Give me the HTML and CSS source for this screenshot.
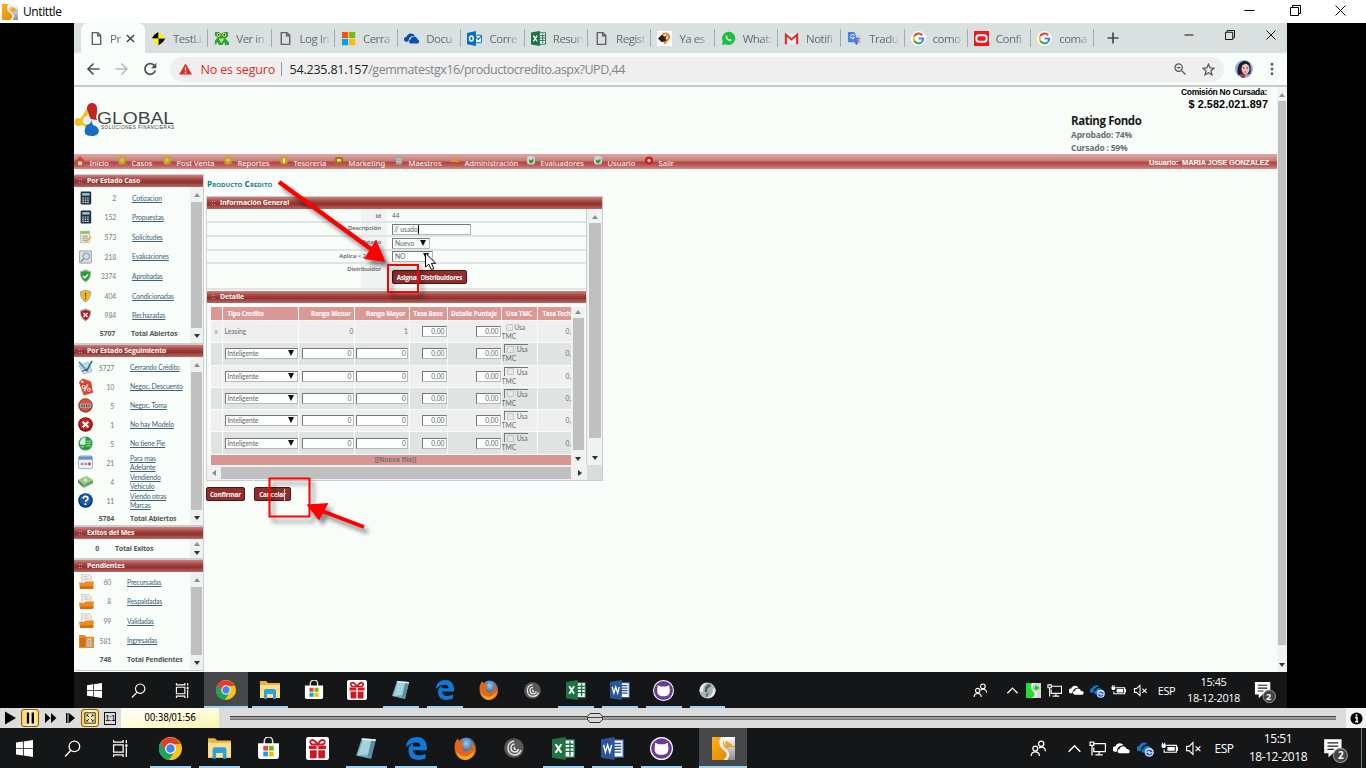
FILE: index.html
```html
<!DOCTYPE html>
<html lang="es">
<head>
<meta charset="utf-8">
<title>Untittle</title>
<link rel="stylesheet" href="styles.css">
</head>
<body>
<svg class="defs" aria-hidden="true">
<defs>
<linearGradient id="gold" x1="0" y1="0" x2="1" y2="1"><stop offset="0" stop-color="#ffae18"/><stop offset="1" stop-color="#dc8500"/></linearGradient>
<linearGradient id="silver" x1="0" y1="0" x2="0" y2="1"><stop offset="0" stop-color="#fff"/><stop offset="1" stop-color="#8e8e8e"/></linearGradient>
<radialGradient id="ffx" cx=".5" cy=".3"><stop offset="0" stop-color="#8fd0f5"/><stop offset="1" stop-color="#1e4fa0"/></radialGradient>
<symbol id="player" viewBox="0 0 16 16"><path fill="url(#gold)" d="M0 0h16v16H0z"/><path fill="url(#silver)" d="M6 0h10v6.500H9C8 4 9 2 6 0zM16 7v9H9c2-2 2-4 0-6-1-1-2-2-1-3z"/><path fill="#f0f0f0" d="M6.500 0C4 3 5 7 8 9s3 4 0 7h2.500c3-4 1-6-1-8s-3-4 0-8z"/><path fill="#ffa01a" d="M9.500 2.500l5 3-5 3z"/></symbol>
<symbol id="player-green" viewBox="0 0 16 16"><path fill="#1fe02a" d="M0 0h16v16H0z"/><path fill="#d6d6d6" d="M6 0h10v6H9zM16 6v10H6c4-3 3-5 1-8z"/><path fill="#f0f0f0" d="M6.500 0C4 3 5 7 8 9s3 4 0 7h2.500c3-4 1-6-1-8s-3-4 0-8z"/><path fill="#18c820" d="M9.500 2l5 3-5 3z"/></symbol>
<symbol id="min" viewBox="0 0 11 11"><path d="M.5 5.500h10" stroke="#000"/></symbol>
<symbol id="restore" viewBox="0 0 11 11"><path d="M.5 2.500h8v8h-8zM2.500 2V.5h8v8H9" fill="none" stroke="#000"/></symbol>
<symbol id="close" viewBox="0 0 11 11"><path d="M.5.5l10 10M10.500 .5l-10 10" fill="none" stroke="#000"/></symbol>
<symbol id="page" viewBox="0 0 16 16"><path d="M3.500 1.700h6l3 3v9.600h-9zM9.200 2v3.100h3.200" fill="none" stroke="#5f6368" stroke-width="1.500"/></symbol>
<symbol id="testlink" viewBox="0 0 16 16"><path d="M8 .5L.5 8H8z"/><path d="M8 .5V8h7.500z" fill="#ffee10"/><path d="M.5 8L8 15.500V8z" fill="#ffee10"/><path d="M8 8v7.500L15.500 8z"/><path d="M8 2a6 6 0 0 0-6 6h6zM8 8v6a6 6 0 0 0 6-6z"/><path d="M8 2v6h6a6 6 0 0 0-6-6zM2 8a6 6 0 0 0 6 6V8z" fill="#ffee10"/></symbol>
<symbol id="frog" viewBox="0 0 16 16"><path d="M1 1h4l3 2 3-2h4v5l-3 2 4 4v3h-4l-1-3-2 3H5l-1-3-3 3v-5l3-3-3-2z" fill="#2aa43a"/><circle cx="5" cy="4" r="2" fill="#f4e04a"/><circle cx="11" cy="4" r="2" fill="#f4e04a"/><path d="M5 8h6l-3 5z" fill="#b7ea70"/><circle cx="5" cy="4" r=".8"/><circle cx="11" cy="4" r=".8"/></symbol>
<symbol id="ms" viewBox="0 0 16 16"><path fill="#f65314" d="M1 1h6.600v6.600H1z"/><path fill="#7cbb00" d="M8.600 1h6.600v6.600H8.600z"/><path fill="#00a1f1" d="M1 8.600h6.600v6.600H1z"/><path fill="#ffbb00" d="M8.600 8.600h6.600v6.600H8.600z"/></symbol>
<symbol id="onedrive" viewBox="0 0 18 14"><path fill="#0b4fae" d="M5 11H3a3 3 0 0 1 0-6c1-4 7-6 10-1-5-.5-7 2-8 7z"/><path fill="#0b4fae" d="M8 13c-3-1-2-5 0-5 1-5 8-4 8 0 3 1 3 5 0 5z"/></symbol>
<symbol id="outlook" viewBox="0 0 16 16"><path fill="#fff" stroke="#0072c6" d="M9 4.500h6.500v8H9z"/><path d="M9 6l3 3 4-4" stroke="#0072c6" fill="none" stroke-width="1.300"/><path fill="#0072c6" d="M0 2l9.500-2v16L0 14z"/><ellipse cx="4.700" cy="8" rx="2" ry="2.700" fill="none" stroke="#fff" stroke-width="1.500"/></symbol>
<symbol id="excel" viewBox="0 0 16 16"><path fill="#fff" stroke="#207245" d="M8 2h7.500v12H8z"/><path stroke="#207245" d="M9 5h6M9 7.500h6M9 10h6M12.500 3v10"/><path fill="#207245" d="M0 1.500L9.500 0v16L0 14.500z"/><path d="M2.500 5l4 6M6.500 5l-4 6" stroke="#fff" stroke-width="1.400"/></symbol>
<symbol id="word" viewBox="0 0 16 16"><path fill="#fff" stroke="#2a5699" d="M8 2h7.500v12H8z"/><path stroke="#2a5699" d="M9 4.500h5M9 6.500h5M9 8.500h5M9 10.500h5"/><path fill="#2a5699" d="M0 1.500L9.500 0v16L0 14.500z"/><path d="M1.800 5.500l1.300 5 1.500-5 1.500 5 1.300-5" stroke="#fff" fill="none"/></symbol>
<symbol id="orangepin" viewBox="0 0 16 16"><path fill="#fff" d="M0 0h16v16H0z"/><path d="M5 4c1-4 9-3 9 2 0 3-3 5-6 9 0-3-2-4-2-5z" fill="#f58220"/><circle cx="9" cy="6" r="2.500" fill="#fff"/><path d="M1 8l4-4 3 2 3-2-2 4 1 2-5 2z" fill="#222"/></symbol>
<symbol id="whatsapp" viewBox="0 0 16 16"><path d="M1 15l1-4a7 7 0 1 1 3 3z" fill="#16c03c"/><path d="M5.500 4.500c-2 2 2 7 5.500 6.500l.6-1.700-2-1-1 1c-1-.4-1.800-1.200-2.200-2.300l.8-1z" fill="#fff"/></symbol>
<symbol id="gmail" viewBox="0 0 16 16"><path fill="#eee" d="M1 3h14v11H1z"/><path d="M2 14V4l6 5 6-5v10" fill="none" stroke="#d93025" stroke-width="2.200"/></symbol>
<symbol id="translate" viewBox="0 0 16 16"><path fill="#d0d4d8" d="M6 4h9v11H9z"/><path fill="#4a80e8" d="M1 1h7l4 11H2a1 1 0 0 1-1-1z"/><path fill="#2a5dc0" d="M8 12h4l-2 3z"/><path d="M8 5a2.200 2.200 0 1 0 0 2H6" fill="none" stroke="#fff"/><path d="M10 8h4M12 7v1c0 2-1 3-2 4M11 9l3 3" stroke="#667" fill="none" stroke-width=".8"/></symbol>
<symbol id="google" viewBox="0 0 16 16"><circle cx="8" cy="8" r="8" fill="#fff"/><g fill="none" stroke-width="2.200"><path d="M12 4.600A5.200 5.200 0 0 0 3.400 5.600" stroke="#ea4335"/><path d="M3.400 5.600a5.200 5.200 0 0 0 0 4.800" stroke="#fbbc05"/><path d="M3.400 10.400a5.200 5.200 0 0 0 8 1.500" stroke="#34a853"/><path d="M11.400 11.900c1.300-1.200 1.800-2.500 1.700-3.900H8" stroke="#4285f4"/></g></symbol>
<symbol id="oracle" viewBox="0 0 16 16"><path fill="#f01820" d="M0 0h16v16H0z"/><rect x="2.500" y="4.500" width="11" height="7" rx="3" fill="none" stroke="#fff" stroke-width="2"/></symbol>
<symbol id="win" viewBox="0 0 16 16"><path fill="#fff" d="M0 2.300l6.500-.9v6.100H0zM7.300 1.300L16 0v7.500H7.300zM0 8.300h6.500v6.200L0 13.600zM7.300 8.300H16V16l-8.700-1.300z"/></symbol>
<symbol id="search" viewBox="0 0 16 16"><circle cx="9.800" cy="6" r="5" fill="none" stroke="#fff" stroke-width="1.200"/><path d="M6.500 9.700L1 15.500" stroke="#fff" stroke-width="1.300"/></symbol>
<symbol id="taskview" viewBox="0 0 16 16"><path d="M1.500 4.500h9v7h-9zM1.500 0v2h9V0M1.500 16v-2h9v2M13.500 0v3M13.500 7v9" fill="none" stroke="#fff" stroke-width="1.200"/><path d="M12.500 4h2v2.500h-2z" fill="#fff"/></symbol>
<symbol id="chrome" viewBox="0 0 20 20"><circle cx="10" cy="10" r="10" fill="#fbc116"/><path d="M1.300 5a10 10 0 0 0 7.500 15l5.200-8-6 2z" fill="#1da45a"/><path d="M1.300 5L7 13l3-7h8.700A10 10 0 0 0 1.300 5z" fill="#e33b2e"/><circle cx="10" cy="10" r="4.700" fill="#fff"/><circle cx="10" cy="10" r="3.700" fill="#4285f4"/></symbol>
<symbol id="explorer" viewBox="0 0 20 20"><path fill="#e8b545" d="M0 1h6l2 2h12v15H0z"/><path fill="#fbe08b" d="M0 5h20v13H0z"/><path fill="#2f9fe0" d="M4 11a2 2 0 0 1 2-2h8a2 2 0 0 1 2 2v8h-3v-5H7v5H4z"/></symbol>
<symbol id="store" viewBox="0 0 20 22"><path d="M6 8V4a4 4 0 0 1 8 0v4" fill="none" stroke="#ddd" stroke-width="1.500"/><path fill="#fff" d="M0 6h20v13a2 2 0 0 1-2 2H2a2 2 0 0 1-2-2z"/><path fill="#e8492a" d="M5 8.500h4.500V13H5z"/><path fill="#79b900" d="M10.500 8.500H15V13h-4.500z"/><path fill="#12a0ea" d="M5 14h4.500v4.500H5z"/><path fill="#fcb900" d="M10.500 14H15v4.500h-4.500z"/></symbol>
<symbol id="gift" viewBox="0 0 20 20"><rect width="20" height="20" rx="2" fill="#fff"/><path d="M2.500 7.500h6.800v3H2.500zM10.700 7.500h6.800v3h-6.800zM3.500 11.500h5.800v7H3.500zM10.700 11.500h5.800v7h-5.800z" fill="#d01822"/><path d="M10 6.500C6 0 1.500 3 5 6.500h10c3.500-3.500-1-6.500-5 0z" fill="none" stroke="#d01822" stroke-width="1.700"/></symbol>
<symbol id="notepad" viewBox="0 0 20 20"><path d="M6 1l12 1-4 17-13-3z" fill="#78aebb"/><path d="M7 2l10 1-3.500 12-11 1z" fill="#a4d3df"/><path d="M14 3h4l-4 15-3-1z" fill="#5a8c9e"/><path d="M6 1l12 1v1.500L6 2.500z" fill="#e9eef0"/></symbol>
<symbol id="edge" viewBox="0 0 20 20"><path d="M1 9C1 3 5 0 10.500 0 16 0 19 4 19 9v2.500H7c.3 5 6 5.500 11 3v4c-7 3-15 1.500-15-7 0-3 2-5 4.500-6-.7 1-.8 2-.8 2.800h7c0-5-8-4.800-12.700.7z" fill="#0f79d6"/></symbol>
<symbol id="firefox" viewBox="0 0 20 20"><circle cx="10.500" cy="9" r="8.500" fill="url(#ffx)"/><path d="M1 5l2-4 2 3c2-1 3-1 4-.5L7 6l2 2-2 1c0 4 5 4 6 2 3 0 3-5 1-8 8 5 6 16-4 17C3 20-1 13 1 5z" fill="#e0661a"/><path d="M2 12c3 6 11 7 16-1-1 6-5 9-9 9-4-.5-7-4-7-8z" fill="#f6a21b"/></symbol>
<symbol id="swirl" viewBox="0 0 20 20"><circle cx="10" cy="10" r="9.800" fill="#58595b"/><path d="M10 3C2 4 2 16 10 17c3 0 6-2 7-5M10.500 6c-5 1-4.500 8 .5 8 2 0 3-1 3.500-3M11 9c-1.500 1-.5 3 1 2" fill="none" stroke="#e5e5e5" stroke-width="1.500"/></symbol>
<symbol id="github" viewBox="0 0 20 20"><circle cx="10" cy="10" r="10" fill="#fff"/><circle cx="10" cy="10" r="9" fill="#6b3b98"/><path d="M4.500 5l3 1.200h5l3-1.200.5 5c0 4-2 5.500-6 5.500S4 14 4 10z" fill="#fff"/></symbol>
<symbol id="ball" viewBox="0 0 20 20"><circle cx="10" cy="10" r="9.500" fill="#a9b4b5"/><path d="M10 .5C6 3 4 7 5 11l-4 1A9.500 9.500 0 0 1 10 .5zM9 19c5-2 8-6 7-11l3-1c2 6-3 13-10 12z" fill="#e9eded"/><path d="M7 12c-1-4 1-8 5-10l2 3c-3 1-5 4-4 7zM9 18l-1-4c3 0 5-2 6-5" fill="#566163"/></symbol>
<symbol id="people" viewBox="0 0 16 16"><g fill="none" stroke="#fff" stroke-width="1.200"><circle cx="10.500" cy="3.600" r="2.500"/><circle cx="5" cy="8" r="2.300"/><path d="M1.200 15c0-5 7.600-5 7.600 0M8.500 7.500c3-2 6-.5 6 3"/></g></symbol>
<symbol id="chev" viewBox="0 0 16 16"><path d="M2.500 11L8 5.500l5.500 5.500" fill="none" stroke="#fff" stroke-width="1.400"/></symbol>
<symbol id="net" viewBox="0 0 16 16"><path d="M5 3.500h10.500v7.500H4.500V7M9.500 11v3M6 14h7M1 2h3.500v3H1zM2.800 5v9.500" fill="none" stroke="#fff" stroke-width="1.200"/></symbol>
<symbol id="cloud" viewBox="0 0 16 16"><path fill="#fff" d="M3.500 11H2a2.500 2.500 0 0 1 .3-5C3.500 2.500 8 2 10 5 6 5 4 7 3.500 11z"/><path fill="#fff" d="M6 12.500c-2.500-.5-2-4 .2-4C7 5 12 5 12.500 8.300c4 .2 4 4 1.500 4.200z"/></symbol>
<symbol id="sync" viewBox="0 0 16 16"><path fill="#1873c8" d="M3.500 10.500H2a2.500 2.500 0 0 1 .3-5C3.500 2 8 1.500 10 4 6 4 4 6.500 3.500 10.500z"/><path fill="#1873c8" d="M6 12c-2.500-.5-2-4 .2-4C7 4.500 12 4.500 12.500 7.500z"/><circle cx="11.500" cy="11.500" r="4.300" fill="#cfe2ff"/><path d="M9 11c1-2 4-2 5 0h-2M14 12.500c-1 2-4 2-5 0h2" fill="none" stroke="#1d4fc0" stroke-width="1.100"/></symbol>
<symbol id="batt" viewBox="0 0 16 16"><path d="M5 5h9.500v6.500H3V9M14.500 7h1v2.500h-1" fill="none" stroke="#fff" stroke-width="1.100"/><path fill="#fff" d="M6 6.500h7V10H6zM.5 4h4v2.500l-1 1h-2l-1-1zM1 2.500h1V4H1zM3 2.500h1V4H3z"/></symbol>
<symbol id="vol" viewBox="0 0 16 16"><path d="M1.500 6h2.200L7.500 2.500v11L3.700 10H1.500zM10 6l4.500 4.500M14.500 6L10 10.500" fill="none" stroke="#fff" stroke-width="1.100"/></symbol>
<symbol id="note" viewBox="0 0 24 24"><path fill="#fff" d="M2 2h16v13h-8l-4 4v-4H2z"/><path d="M5 5.500h10M5 8.500h10M5 11.500h6" stroke="#222" stroke-width="1.200"/><circle cx="17" cy="17" r="6.500" fill="#454545" stroke="#999"/></symbol>
<symbol id="calc" viewBox="0 0 16 16"><rect x="2" y="0" width="13" height="16" rx="1.500" fill="#26303b"/><path fill="#91c9e4" d="M4 2h9v3H4z"/><path stroke="#dfe6ea" stroke-width="1.500" stroke-dasharray="2 1" d="M4 8h9M4 10.700h9M4 13.500h9"/></symbol>
<symbol id="form" viewBox="0 0 16 16"><path fill="#e8ecea" stroke="#9a9f9d" stroke-width=".7" d="M2 1h11v14H2z"/><path fill="#8dc63f" d="M2 1h11v3H2z"/><path stroke="#888" d="M4 7h7M4 9.500h7M4 12h5"/><path stroke="#e8b020" stroke-width="2" d="M8 14l7-6"/></symbol>
<symbol id="lens" viewBox="0 0 16 16"><rect x=".5" y=".5" width="15" height="15" rx="1" fill="#d8dedd" stroke="#8b9694"/><circle cx="9" cy="7" r="4" fill="#c5e0f2" stroke="#6e8796"/><path d="M6 10l-4 4" stroke="#6e8796" stroke-width="1.500"/></symbol>
<symbol id="sh-ok" viewBox="0 0 16 16"><path d="M8 0l7 2.500C15 9 13 13 8 16 3 13 1 9 1 2.500z" fill="#a7aca5"/><path d="M8 1.700l5.500 2C13.500 9 12 12 8 14.300 4 12 2.500 9 2.500 3.700z" fill="#20a028"/><path d="M5 8l2.300 2.300L11.200 6" stroke="#fff" stroke-width="1.800" fill="none"/></symbol>
<symbol id="sh-warn" viewBox="0 0 16 16"><path d="M8 0l7 2.500C15 9 13 13 8 16 3 13 1 9 1 2.500z" fill="#a7aca5"/><path d="M8 1.700l5.500 2C13.500 9 12 12 8 14.300 4 12 2.500 9 2.500 3.700z" fill="#f0bd1a"/><path d="M8 4v5M8 10.300v1.700" stroke="#6b5200" stroke-width="1.500"/></symbol>
<symbol id="sh-no" viewBox="0 0 16 16"><path d="M8 0l7 2.500C15 9 13 13 8 16 3 13 1 9 1 2.500z" fill="#a7aca5"/><path d="M8 1.700l5.500 2C13.500 9 12 12 8 14.300 4 12 2.500 9 2.500 3.700z" fill="#b81418"/><path d="M5.500 5.500l5 5M10.500 5.500l-5 5" stroke="#fff" stroke-width="1.700"/></symbol>
<symbol id="sign" viewBox="0 0 16 16"><path d="M1 6l10-4 4 10-9 3z" fill="#c3dbe7" stroke="#8fb0c0" stroke-width=".7"/><path d="M1 2l8 9" stroke="#5b93b2" stroke-width="2"/><path d="M15 1L9 12" stroke="#2f6e92" stroke-width="1.700"/><path d="M4 12l6-2" stroke="#444"/></symbol>
<symbol id="tag" viewBox="0 0 16 18"><path d="M1 4l4-4 9 3 2 12-10 3z" fill="#dd4630"/><circle cx="4.700" cy="3.500" r="1.200" fill="#fff"/><path d="M6.500 13.500l4-7" stroke="#fff" stroke-width="1.300"/><circle cx="6" cy="9" r="1.600" fill="none" stroke="#fff"/><circle cx="11.500" cy="12" r="1.600" fill="none" stroke="#fff"/></symbol>
<symbol id="sur" viewBox="0 0 16 16"><circle cx="8" cy="8" r="7.700" fill="#8f3a2c"/><circle cx="8" cy="7.500" r="6.500" fill="#d4583f"/><path d="M2 6h12v4.500H2z" fill="#b9a39c"/><path d="M3.500 8.300h9" stroke="#6b4640" stroke-width="2" stroke-dasharray="1.500 1"/></symbol>
<symbol id="xred" viewBox="0 0 16 16"><circle cx="8" cy="8" r="7.800" fill="#8d0d10"/><circle cx="8" cy="7.500" r="6.500" fill="#c9201f"/><path d="M5 5l6 6M11 5l-6 6" stroke="#fff" stroke-width="2.300"/></symbol>
<symbol id="coins" viewBox="0 0 16 16"><circle cx="8" cy="8" r="7.500" fill="#2c9a40"/><path d="M8 1a7 7 0 0 0-6 8h6z" fill="#d9efd5"/><path d="M3 9h4M3 11.500h4M9 5.500h5M9 8h5M9 10.500h4.500" stroke="#a7e0a5" stroke-width="1.100"/></symbol>
<symbol id="cal" viewBox="0 0 16 16"><rect x=".5" y="1" width="15" height="13.500" rx="2" fill="#eef2f8" stroke="#95a5c5"/><path fill="#5f91d4" d="M1 1.500h14v3.500H1z"/><path d="M3 9.500h3M7 9.500h3" stroke="#999" stroke-width="2.500"/><path d="M11 9.500h2.500" stroke="#d33" stroke-width="3"/></symbol>
<symbol id="money" viewBox="0 0 16 16"><path d="M0 6l9-4 7 4-10 5z" fill="#9cc884"/><path d="M0 6l6 5v4L0 9z" fill="#55904a"/><path d="M6 11l10-5v4l-10 5z" fill="#7fb46a"/><path d="M6 13l10-5" stroke="#4f8846" stroke-width=".8"/><circle cx="8" cy="6.300" r="1.900" fill="#d2ebc3"/></symbol>
<symbol id="help" viewBox="0 0 16 16"><circle cx="8" cy="8" r="7.800" fill="#0a2f66"/><circle cx="8" cy="7.500" r="6.600" fill="#1a5aa8"/><path d="M5.500 6c0-3.300 5.200-3 5 0-.1 1.800-2.300 1.700-2.400 3.500M8 10.800v2" fill="none" stroke="#fff" stroke-width="1.900"/></symbol>
<symbol id="folder" viewBox="0 0 16 16"><path d="M3 0h7l3 3v8H3z" fill="#f3efe8" stroke="#b5aca0" stroke-width=".7"/><path d="M5 3h4M5 5.500h6" stroke="#aaa" stroke-width=".7"/><path d="M0 9l5 .5L7 8h9l-1 8H1z" fill="#ee8a25"/><path d="M1 13h14.500l-.5 3H1z" fill="#d36f10"/></symbol>
<symbol id="folderlock" viewBox="0 0 16 16"><path d="M0 2h6l2 2h8v12H0z" fill="#ee8a25"/><path d="M1 5h6v10H1z" fill="#d36f10"/><rect x="8" y="9" width="6" height="6" rx="1" fill="#b9b9b9"/><path d="M9.500 9V6.500h3V9" fill="none" stroke="#ddd" stroke-width="1.200"/></symbol>
<symbol id="m-home" viewBox="0 0 10 10"><path d="M5 0l5 5-1.500 1v4h-7V6L0 5z" fill="#d3452f"/><path d="M3 5.500h4V9H3z" fill="#f5e3d8"/></symbol>
<symbol id="m-search" viewBox="0 0 10 10"><rect x="1.500" y=".5" width="7" height="8" rx="2.500" fill="#c9a227"/><circle cx="5" cy="4" r="1.800" fill="#dcc353"/><path d="M7 6.500l2.500 2" stroke="#b08a18" stroke-width="1.500"/></symbol>
<symbol id="m-coin" viewBox="0 0 10 10"><circle cx="5" cy="4.500" r="4" fill="#c4a01c"/><path d="M5 2.500v4" stroke="#fbf3b5" stroke-width="2"/></symbol>
<symbol id="m-card" viewBox="0 0 10 10"><rect x="1" y="1" width="8" height="7" rx="2" fill="#9d7612"/><path d="M3 3h4v2.500H3z" fill="#f3de7c"/></symbol>
<symbol id="m-db" viewBox="0 0 10 10"><rect x="2" y="0" width="6" height="8.500" rx="1.500" fill="#9fa8a8"/><path d="M2 3h6M2 5.500h6" stroke="#c8d0d0" stroke-width=".8"/></symbol>
<symbol id="m-key" viewBox="0 0 10 10"><path d="M1 5h5" stroke="#caa321" stroke-width="1.800"/><circle cx="7" cy="4" r="1.800" fill="none" stroke="#caa321" stroke-width="1.300"/></symbol>
<symbol id="m-user" viewBox="0 0 10 10"><rect x="1" y="0" width="8" height="8.500" rx="2.500" fill="#c9d5d0"/><path d="M3 6.500V3.500l2 1 2.500-2v3l-2 2z" fill="#2f9a3a"/></symbol>
<symbol id="m-exit" viewBox="0 0 10 10"><circle cx="5" cy="4.500" r="4" fill="#c8201a"/><path d="M5 3v3M3.500 4.500h3" stroke="#fff" stroke-width="1.300"/></symbol>
</defs>
</svg>

<div class="window">
  <header class="titlebar">
    <svg class="i16"><use href="#player"/></svg><span class="wtitle">Untittle</span>
    <div class="wctl outerctl"><svg><use href="#min"/></svg><svg><use href="#restore"/></svg><svg><use href="#close"/></svg></div>
  </header>

  <div class="stage">
  <div class="screen">
    <div class="tabs">
      <div class="tab active"><svg class="i16"><use href="#page"/></svg><span>Pr</span><svg class="tx" viewBox="0 0 10 10"><path d="M1 1l8 8M9 1L1 9" stroke="#444" stroke-width="1.600"/></svg></div>
      <div class="tab"><svg class="i16"><use href="#testlink"/></svg><span>TestLi</span></div>
      <div class="tab"><svg class="i16"><use href="#frog"/></svg><span>Ver in</span></div>
      <div class="tab"><svg class="i16"><use href="#page"/></svg><span>Log In</span></div>
      <div class="tab"><svg class="i16"><use href="#ms"/></svg><span>Cerra</span></div>
      <div class="tab"><svg class="i16"><use href="#onedrive"/></svg><span>Docu</span></div>
      <div class="tab"><svg class="i16"><use href="#outlook"/></svg><span>Corre</span></div>
      <div class="tab"><svg class="i16"><use href="#excel"/></svg><span>Resun</span></div>
      <div class="tab"><svg class="i16"><use href="#page"/></svg><span>Regist</span></div>
      <div class="tab"><svg class="i16"><use href="#orangepin"/></svg><span>Ya es</span></div>
      <div class="tab"><svg class="i16"><use href="#whatsapp"/></svg><span>What:</span></div>
      <div class="tab"><svg class="i16"><use href="#gmail"/></svg><span>Notifi</span></div>
      <div class="tab"><svg class="i16"><use href="#translate"/></svg><span>Tradu</span></div>
      <div class="tab"><svg class="i16"><use href="#google"/></svg><span>como</span></div>
      <div class="tab"><svg class="i16"><use href="#oracle"/></svg><span>Confi</span></div>
      <div class="tab"><svg class="i16"><use href="#google"/></svg><span>coma</span></div>
      <svg class="plus" viewBox="0 0 12 12"><path d="M6 .5v11M.5 6h11" stroke="#444b4f" stroke-width="1.700"/></svg>
      <div class="wctl innerctl"><svg><use href="#min"/></svg><svg><use href="#restore"/></svg><svg><use href="#close"/></svg></div>
    </div>
    <div class="toolbar">
      <svg class="nav" viewBox="0 0 14 14"><path d="M7.500 1.500L2 7l5.500 5.500M2 7h11.500" fill="none" stroke="#50555a" stroke-width="1.700"/></svg>
      <svg class="nav" viewBox="0 0 14 14"><path d="M6.500 1.500L12 7l-5.500 5.500M12 7H.5" fill="none" stroke="#b6babb" stroke-width="1.500"/></svg>
      <svg class="nav" viewBox="0 0 14 14"><path d="M11.600 4A5.300 5.300 0 1 0 12.300 8.500" fill="none" stroke="#50555a" stroke-width="1.800"/><path d="M13.300.8v5.400H8z" fill="#50555a"/></svg>
      <div class="omni">
        <svg class="warn" viewBox="0 0 14 12"><path d="M7 0l7 12H0z" fill="#d93025"/><path d="M7 4v4M7 9v1.600" stroke="#fff" stroke-width="1.300"/></svg>
        <span class="unsafe">No es seguro</span><i class="bar"></i><span class="url"><b>54.235.81.157</b>/gemmatestgx16/productocredito.aspx?UPD,44</span>
        <svg class="mag" viewBox="0 0 13 13"><circle cx="5" cy="5" r="4" fill="none" stroke="#50555a" stroke-width="1.300"/><path d="M3 5h4M8 8l4.500 4.500" stroke="#50555a" stroke-width="1.400"/></svg>
        <svg class="star" viewBox="0 0 14 14"><path d="M7 1.200l1.700 4 4.300.4-3.300 2.800 1 4.300L7 10.400l-3.700 2.300 1-4.300L1 5.600l4.300-.4z" fill="none" stroke="#50555a" stroke-width="1.300"/></svg>
      </div>
      <svg class="avatar" viewBox="0 0 18 18"><circle cx="9" cy="9" r="9" fill="#86aee4"/><path d="M3 15C1 6 5 1 10 1s7 6 5 13z" fill="#241a24"/><ellipse cx="10.500" cy="9" rx="4" ry="5.300" fill="#eec1b8"/><path d="M4 14l4-.5 2 2.500v1.800H7z" fill="#c3272e"/><path d="M8 8h1.500M11.500 8h1.500" stroke="#333"/><path d="M9.500 12h2" stroke="#b33"/></svg>
      <svg class="dots" viewBox="0 0 4 12"><path d="M.8 0h2.400v2.400H.8zM.8 4.800h2.400v2.400H.8zM.8 9.600h2.400V12H.8z" fill="#50555a"/></svg>
    </div>

    <div class="viewport">
      <div class="page">
        <div class="head">
          <svg class="logo" viewBox="0 0 102 36"><path d="M3 20C12 18 10 10 17 6M3 21c9 0 10 2 13 6" fill="none" stroke="#f3c023" stroke-width="4"/><circle cx="18" cy="6" r="5" fill="#c0271f"/><path d="M13 6c1 5 2 6 3 11l7 1c-2-5 1-6 0-12z" fill="#c0271f"/><circle cx="4.500" cy="20" r="4" fill="#f3c023"/><path d="M12 24c4-3 2-7 4-9l3 8c8 2 8 11-1 11s-8-5-6-10z" fill="#1470c0"/><circle cx="13" cy="18.500" r="4" fill="#e6f2fa"/><text x="23" y="22" font-family="Liberation Sans" font-size="16" textLength="77" lengthAdjust="spacingAndGlyphs" fill="#444">GLOBAL</text><text x="27" y="26.500" font-family="Liberation Sans" font-size="4.500" textLength="73" fill="#333">SOLUCIONES FINANCIERAS</text></svg>
          <div class="stats">
            <div class="com">Comisión No Cursada:</div><div class="amt">$ 2.582.021.897</div>
            <div class="rating"><h2>Rating Fondo</h2><p>Aprobado: 74%</p><p>Cursado : 59%</p></div>
          </div>
        </div>
        <nav class="menu">
          <a><svg><use href="#m-home"/></svg>Inicio</a><a><svg><use href="#m-search"/></svg>Casos</a><a><svg><use href="#m-search"/></svg>Post Venta</a><a><svg><use href="#m-search"/></svg>Reportes</a><a><svg><use href="#m-coin"/></svg>Tesorería</a><a><svg><use href="#m-card"/></svg>Marketing</a><a><svg><use href="#m-db"/></svg>Maestros</a><a><svg><use href="#m-key"/></svg>Administración</a><a><svg><use href="#m-user"/></svg>Evaluadores</a><a><svg><use href="#m-user"/></svg>Usuario</a><a><svg><use href="#m-exit"/></svg>Salir</a>
          <b>Usuario:&nbsp; MARIA JOSE GONZALEZ</b>
        </nav>
        <div class="cols">
          <aside class="side">
            <section class="box p1"><h3>Por Estado Caso</h3><div class="body"><ul>
              <li><svg><use href="#calc"/></svg><i>2</i><a>Cotizacion</a></li>
              <li><svg><use href="#calc"/></svg><i>152</i><a>Propuestas</a></li>
              <li><svg><use href="#form"/></svg><i>573</i><a>Solicitudes</a></li>
              <li><svg><use href="#lens"/></svg><i>218</i><a>Evaluaciones</a></li>
              <li><svg><use href="#sh-ok"/></svg><i>3374</i><a>Aprobadas</a></li>
              <li><svg><use href="#sh-warn"/></svg><i>404</i><a>Condicionadas</a></li>
              <li><svg><use href="#sh-no"/></svg><i>984</i><a>Rechazadas</a></li>
              <li class="tot"><i>5707</i><span>Total Abiertos</span></li></ul><div class="sb"><em></em></div></div></section>
            <section class="box p2"><h3>Por Estado Seguimiento</h3><div class="body"><ul>
              <li><svg><use href="#sign"/></svg><i>5727</i><a>Cerrando Crédito</a></li>
              <li><svg class="tall"><use href="#tag"/></svg><i>10</i><a>Negoc. Descuento</a></li>
              <li><svg><use href="#sur"/></svg><i>5</i><a>Negoc. Toma</a></li>
              <li><svg><use href="#xred"/></svg><i>1</i><a>No hay Modelo</a></li>
              <li><svg><use href="#coins"/></svg><i>5</i><a>No tiene Pie</a></li>
              <li><svg><use href="#cal"/></svg><i>21</i><a>Para mas<br>Adelante</a></li>
              <li><svg><use href="#money"/></svg><i>4</i><a>Vendiendo<br>Vehiculo</a></li>
              <li><svg><use href="#help"/></svg><i>11</i><a>Viendo otras<br>Marcas</a></li>
              <li class="tot"><i>5784</i><span>Total Abiertos</span></li></ul><div class="sb"><em></em></div></div></section>
            <section class="box p3"><h3>Exitos del Mes</h3><div class="body"><ul>
              <li class="tot"><i>0</i><span>Total Exitos</span></li></ul><div class="sb"></div></div></section>
            <section class="box p4"><h3>Pendientes</h3><div class="body"><ul>
              <li><svg><use href="#folder"/></svg><i>60</i><a>Precursadas</a></li>
              <li><svg><use href="#folder"/></svg><i>8</i><a>Respaldadas</a></li>
              <li><svg><use href="#folder"/></svg><i>99</i><a>Validadas</a></li>
              <li><svg><use href="#folderlock"/></svg><i>581</i><a>Ingresadas</a></li>
              <li class="tot"><i>748</i><span>Total Pendientes</span></li></ul><div class="sb"><em></em></div></div></section>
          </aside>
          <main class="main">
            <h1>Producto Credito</h1>
            <section class="panel">
              <h3>Información General</h3>
              <div class="pbody">
                <div class="pcontent">
                  <div class="form">
                    <div class="fr f1"><label>Id</label><span>44</span></div>
                    <div class="fr f2"><label>Descripción</label><span class="inp desc">// usado<u></u></span></div>
                    <div class="fr f3"><label>Estado</label><span class="inp sel s1">Nuevo</span></div>
                    <div class="fr f4"><label>Aplica &lt; 2 años</label><span class="inp sel s2">NO</span></div>
                    <div class="fr f5"><label>Distribuidor</label><button class="btn">Asignar Distribuidores</button></div>
                  </div>
                  <h3 class="det">Detalle</h3>
                  <div class="gridwrap">
                    <div class="grid">
                      <div class="gr gh"><div></div><div>Tipo Credito</div><div>Rango Menor</div><div>Rango Mayor</div><div>Tasa Base</div><div>Detalle Puntaje</div><div>Usa TMC</div><div>Tasa Tech</div></div>
                      <div class="gr g0"><div class="x">x</div><div>Leasing</div><div>0</div><div>1</div><div><span class="inp n2">0,00</span></div><div><span class="inp n2">0,00</span></div><div class="tmc"><s></s> Usa<br>TMC</div><div>0,</div></div>
                      <div class="gr alt"><div></div><div><span class="inp sel">Inteligente</span></div><div><span class="inp n1">0</span></div><div><span class="inp n1">0</span></div><div><span class="inp n2">0,00</span></div><div><span class="inp n2">0,00</span></div><div class="tmc bd"><span><s></s> Usa</span><br>TMC</div><div>0,</div></div>
                      <div class="gr"><div></div><div><span class="inp sel">Inteligente</span></div><div><span class="inp n1">0</span></div><div><span class="inp n1">0</span></div><div><span class="inp n2">0,00</span></div><div><span class="inp n2">0,00</span></div><div class="tmc bd"><span><s></s> Usa</span><br>TMC</div><div>0,</div></div>
                      <div class="gr alt"><div></div><div><span class="inp sel">Inteligente</span></div><div><span class="inp n1">0</span></div><div><span class="inp n1">0</span></div><div><span class="inp n2">0,00</span></div><div><span class="inp n2">0,00</span></div><div class="tmc bd"><span><s></s> Usa</span><br>TMC</div><div>0,</div></div>
                      <div class="gr"><div></div><div><span class="inp sel">Inteligente</span></div><div><span class="inp n1">0</span></div><div><span class="inp n1">0</span></div><div><span class="inp n2">0,00</span></div><div><span class="inp n2">0,00</span></div><div class="tmc bd"><span><s></s> Usa</span><br>TMC</div><div>0,</div></div>
                      <div class="gr alt"><div></div><div><span class="inp sel">Inteligente</span></div><div><span class="inp n1">0</span></div><div><span class="inp n1">0</span></div><div><span class="inp n2">0,00</span></div><div><span class="inp n2">0,00</span></div><div class="tmc bd"><span><s></s> Usa</span><br>TMC</div><div>0,</div></div>
                      <div class="newrow">[[Nueva fila]]</div>
                    </div>
                    <div class="sb"><em></em></div>
                  </div>
                </div>
                <div class="sb sbp"><em></em></div>
              </div>
              <div class="pfoot"><div class="hsb"><em></em></div><div class="corner"></div></div>
            </section>
            <div class="actions"><button class="btn">Confirmar</button><button class="btn">Cancelar</button></div>
          </main>
        </div>
      </div>
      <div class="sb sbmain"><em></em></div>
    </div>

    <div class="taskbar inner">
      <div class="app"><svg class="s"><use href="#win"/></svg></div><div class="app"><svg class="s"><use href="#search"/></svg></div><div class="app"><svg class="s"><use href="#taskview"/></svg></div>
      <div class="app run on"><svg><use href="#chrome"/></svg></div><div class="app run"><svg><use href="#explorer"/></svg></div><div class="app"><svg><use href="#store"/></svg></div><div class="app"><svg><use href="#gift"/></svg></div><div class="app run"><svg><use href="#notepad"/></svg></div><div class="app run"><svg><use href="#edge"/></svg></div><div class="app"><svg><use href="#firefox"/></svg></div><div class="app"><svg class="m"><use href="#swirl"/></svg></div><div class="app run"><svg><use href="#excel"/></svg></div><div class="app run"><svg><use href="#word"/></svg></div><div class="app run"><svg class="l"><use href="#github"/></svg></div><div class="app run"><svg class="m"><use href="#ball"/></svg></div>
      <div class="tray"><svg class="ppl"><use href="#people"/></svg><svg><use href="#chev"/></svg><svg><use href="#player-green"/></svg><svg><use href="#net"/></svg><svg><use href="#cloud"/></svg><svg><use href="#sync"/></svg><svg><use href="#batt"/></svg><svg><use href="#vol"/></svg><span class="lang">ESP</span><span class="clock">15:45<br>18-12-2018</span><span class="nt"><svg><use href="#note"/></svg><b>2</b></span></div>
    </div>

    <svg class="marks" viewBox="74 23 1213 685">
      <g class="shadow" fill="none" stroke="#f00">
        <path d="M388 265h30v27h-30zM269.500 478.500h40v38h-40z" stroke-width="2"/>
        <path d="M279 182l92 67" stroke-width="4.500"/><path d="M385.500 262l-21.500-3 12-19.500z" fill="#f00" stroke="none"/>
        <path d="M364 527l-42-16" stroke-width="4"/><path d="M306.500 504.500l22-1.500-9.500 17.500z" fill="#f00" stroke="none"/>
      </g>
      <path d="M284.500 489v12" stroke="#e8d0d0"/>
      <path d="M425.500 253v14l3.300-2.800 2.600 5.600 2.500-1.200-2.500-5.300h4.300z" fill="#fff" stroke="#000"/>
    </svg>
  </div>
  </div>

  <div class="player">
    <svg class="pb" viewBox="0 0 20 20"><path d="M5 3.500l11 6.500-11 6.500z"/></svg>
    <div class="pb hot"><svg viewBox="0 0 20 20"><path d="M6 3h3v14H6zM12 3h3v14h-3z"/></svg></div>
    <svg class="pb" viewBox="0 0 20 20"><path d="M5 5l5.500 5L5 15zM11 5l5.500 5-5.500 5z"/></svg>
    <svg class="pb" viewBox="0 0 20 20"><path d="M6 5h1.500v10H6zM8.500 5h1v10h-1zM9 5l6 5-6 5z"/></svg>
    <div class="pb hot"><svg viewBox="0 0 20 20"><path d="M3.500 3.500h13v13h-13zM6 8V6h2M12 6h2v2M14 12v2h-2M8 14H6v-2M6.500 6.500l2.500 2.500M13.500 6.500L11 9M13.500 13.500L11 11M6.500 13.500L9 11" fill="none" stroke="#000"/></svg></div>
    <div class="pb one"><span>1:1</span></div>
    <div class="time">00:38/01:56</div>
    <div class="slider"><div class="track"></div><svg class="knob" viewBox="0 0 16 10"><path d="M3 .5h10l2.500 3v3l-2.500 3H3L.5 6.500v-3z" fill="#d5d8d2" stroke="#333"/><path d="M1 4.500h14" stroke="#444"/></svg></div>
    <div class="info"><svg viewBox="0 0 14 14"><circle cx="7" cy="7" r="6.500"/><path d="M7 2.500v2M5.500 6H7.500v4.500M5.500 10.500h3.500" stroke="#fff" stroke-width="1.600" fill="none"/></svg></div>
  </div>

  <div class="taskbar outer">
    <div class="app w48"><svg class="s"><use href="#win"/></svg></div><div class="app w48"><svg class="s"><use href="#search"/></svg></div><div class="app w48 tv"><svg class="s"><use href="#taskview"/></svg></div>
    <div class="app run"><svg><use href="#chrome"/></svg></div><div class="app run"><svg><use href="#explorer"/></svg></div><div class="app"><svg><use href="#store"/></svg></div><div class="app"><svg><use href="#gift"/></svg></div><div class="app run"><svg><use href="#notepad"/></svg></div><div class="app run"><svg><use href="#edge"/></svg></div><div class="app"><svg><use href="#firefox"/></svg></div><div class="app"><svg class="m"><use href="#swirl"/></svg></div><div class="app run"><svg><use href="#excel"/></svg></div><div class="app run"><svg><use href="#word"/></svg></div><div class="app run"><svg><use href="#github"/></svg></div><div class="app run on last"><svg><use href="#player"/></svg></div>
    <div class="tray"><svg class="ppl"><use href="#people"/></svg><svg><use href="#chev"/></svg><svg><use href="#net"/></svg><svg><use href="#cloud"/></svg><svg><use href="#sync"/></svg><svg><use href="#batt"/></svg><svg><use href="#vol"/></svg><span class="lang">ESP</span><span class="clock">15:51<br>18-12-2018</span><span class="nt"><svg><use href="#note"/></svg><b>2</b></span><i class="peek"></i></div>
  </div>
</div>
</body>
</html>
```
FILE: styles.css
```css
*{box-sizing:border-box;margin:0;padding:0}
body{font-family:"Open Sans","Noto Sans",sans-serif;background:#000;overflow:hidden}
svg{display:block;flex:none}
ul{list-style:none}
.defs{position:absolute;width:0;height:0}
.window{width:1366px;height:768px;display:flex;flex-direction:column}
.i16{width:16px;height:16px}

/* player window title */
.titlebar{height:23px;background:#fff;display:flex;align-items:center;padding-left:2px;flex:none}
.wtitle{font-size:12px;margin-left:5px;letter-spacing:-.4px;color:#000;flex:1}
.wctl{display:flex}
.wctl svg{width:11px;height:11px}
.outerctl{gap:34.500px;padding-right:20px;margin-top:-3px}

.stage{height:685px;flex:none;background:#000;padding-left:74px}
.screen{width:1213px;height:685px;position:relative;display:flex;flex-direction:column;background:#f8fdfa}

/* browser tabs */
.tabs{height:30px;flex:none;background:#d9e0df;display:flex;padding-left:7px}
.tab{width:63.300px;display:flex;align-items:center;padding-left:6px;position:relative;font-size:11.500px;color:#666b6c;flex:none}
.tab .i16{width:15px;height:15px}
.tab span{margin-left:7px;width:32px;white-space:nowrap;letter-spacing:-.5px;mask-image:linear-gradient(90deg,#000 60%,rgba(0,0,0,.15) 92%)}
.tab:not(.active)::after{content:"";width:1px;height:18px;background:#a4aaa9;margin-left:auto}
.tab.active{width:64px;background:#f8fdfa;border-radius:7px 7px 0 0;padding-left:8px}
.tab.active span{width:15px;margin-left:6px}
.tx{width:9px;height:9px;margin-left:auto;margin-right:10px}
.plus{width:12px;height:12px;margin:9px 0 0 13px}
.innerctl{margin-left:auto;gap:31px;padding-right:11px;margin-top:7px}
.innerctl svg{width:10px;height:10px}

.toolbar{height:34px;flex:none;display:flex;align-items:center;border-bottom:2px solid #c6ccc9;padding-left:12px;background:#f8fdfa}
.nav{width:14px;height:14px;margin-right:14.500px}
.omni{width:1054px;height:25px;margin-left:-2px;background:#efefef;border-radius:13px;display:flex;align-items:center;padding-left:9px;font-size:12.500px}
.warn{width:13px;height:12px}
.unsafe{color:#d93025;margin-left:9px;width:73px;letter-spacing:-.15px;white-space:nowrap}
.bar{width:1px;height:14px;background:#999;margin:0 8px 0 7px}
.url{color:#80868b;letter-spacing:-.46px;white-space:nowrap}
.url b{font-weight:400;color:#222;letter-spacing:-.2px}
.mag{width:12px;height:12px;margin-left:auto}
.star{width:13px;height:13px;margin:0 9px 0 16px}
.avatar{width:18px;height:18px;margin-left:11px}
.dots{width:4px;height:12px;margin-left:17px}

.viewport{height:585px;flex:none;display:flex}
.page{width:1203px;height:585px}

/* scrollbars */
.sb{width:13px;background:#f0f2f1;display:flex;flex-direction:column;align-items:center;justify-content:space-between;flex:none;padding:6px 0 5px}
.sb::before,.sb::after{content:"";border:3.500px solid transparent;flex:none}
.sb::before{border-top:0;border-bottom:4px solid #8b8f8d}
.sb::after{border-bottom:0;border-top:4px solid #333}
.sb em{width:11px;flex:1;background:#c0c0c0;margin:5px 0 6px}
.sbmain{width:10px}
.sbmain em{width:8px;margin:4px 0 18px}

/* site header */
.head{height:67px;display:flex;justify-content:space-between}
.logo{width:102px;height:36px;margin-top:15px}
.stats{width:206px;padding-right:9px;font-weight:700;color:#000}
.com{font:700 8.500px/11px "Liberation Sans",sans-serif;text-align:right;letter-spacing:-.28px;white-space:nowrap;padding-right:1px}
.amt{font:700 10.800px/13px "Liberation Sans",sans-serif;text-align:right;letter-spacing:.1px}
.rating h2{font:700 11.500px/17px "Open Sans",sans-serif;letter-spacing:-.42px;margin-top:1px;color:#1a1a1a}
.rating p{font-size:8.500px;line-height:12.500px;color:#6c706e;letter-spacing:-.2px}
.menu{height:15px;display:grid;grid-template-columns:42px 45px 61px 56px 55px 60px 56px 76px 67px 51px 120px 1fr;padding:0 8px 0 1px;background:linear-gradient(#dcaaa8,#c87c79 45%,#b04540 55%,#c0625e 80%,#d58f8c);font:7.600px/18px "Noto Sans",sans-serif;color:#fff}
.menu a{display:flex;gap:4.500px;white-space:nowrap}
.menu svg{width:10px;height:10px;margin-top:2px}
.menu b{font:700 7.500px/17px "Liberation Sans",sans-serif;text-align:right;letter-spacing:-.15px}
.cols{display:flex}
h3{height:12px;font:700 6.900px/12px "Open Sans","Noto Sans",sans-serif;letter-spacing:-.1px;color:#fff;padding-left:13px;background:linear-gradient(#cb8380,#a94642 35%,#8f312e 60%,#b96864);position:relative;white-space:nowrap}
h3::before{content:"";width:4px;height:5px;background:radial-gradient(circle,#e5b9b7 35%,transparent 40%) 0 0/2.500px 3px;position:absolute;left:4px;top:3px}

/* left column */
.side{width:130px;padding-top:5px;font-family:Lato,sans-serif;font-size:6.800px;letter-spacing:-.14px}
.box{border:solid #c9cfcc;border-width:1px 1px 1px 0}
.body{display:flex}
.body ul{flex:1}
.body li{display:flex;align-items:center;height:19.600px;padding-left:4px}
.body li svg{width:13px;height:14px}
.body li i{font-style:normal;color:#777b79;text-align:right;width:24px;flex:none}
.body li a,.body li span{margin-left:16px;white-space:nowrap}
.body li a{color:#3f6279;text-decoration:underline;line-height:8.500px}
.body li.tot{font:700 7px "Open Sans",sans-serif;color:#555958;letter-spacing:-.2px}
.body li.tot i{color:#555958}
.p1{height:170px}.p1 .body{height:156px}.p1 ul{padding-top:1px}
.p1 li.tot{height:17px}
.p1 svg{margin-left:1px}.p1 i{width:23px}
.p1 .tot i{width:37px!important}
.p2{height:182px}.p2 .body{height:168px}.p2 ul{padding-top:1px}
.p2 li{height:19px}
.p2 svg{width:15px!important;height:15px!important}
.p2 svg.tall{height:18px!important}
.p2 i{width:21px!important}
.p2 .tot i{width:36px!important}
.p2 .tot{height:17px}
.p3{height:33px}.p3 .body{height:19px}.p3 .tot i{width:21px!important}
.p3 li.tot{height:18px}
.p3 .sb{padding:3px 0}
.p4{height:112px}.p4 .body{height:98px}
.p4 svg{width:15px!important;height:15px!important;margin-left:1px}
.p4 i{width:17px!important}
.p4 .tot i{width:33px!important}
.p4 .tot{height:18px}

/* product form */
.main{padding:5px 0 0 2px}
h1{font:700 small-caps 8.300px/20px "Open Sans",sans-serif;color:#12797a;padding-left:1px;height:22px;letter-spacing:.05px}
.panel{width:397px;height:285px;border:1px solid #c9cfcc}
.pbody{display:flex;height:256px}
.pcontent{width:380px;border-right:1px solid #c9cfcc}
.form{font-size:6.500px;color:#555;padding-top:1px}
.fr{display:flex;align-items:center;border-bottom:2px solid #e0e4e2;background:linear-gradient(90deg,#f8fdfa 154px,#f0f3f2 154px,#f0f3f2 180px,#f8fdfa 180px)}
.fr label{width:174px;text-align:right;margin-right:11px;font-weight:600;font-size:6px;color:#555c66;letter-spacing:-.08px}
.f2 label,.f3 label,.f4 label{margin-top:-2px}
.f1{height:13px}.f2{height:14px}.f3{height:14px}.f4{height:13px}.f5{height:26px}
.f5 label{align-self:flex-start;margin-top:1px}
.inp{display:block;height:11px;border:1px solid #b5bab8;border-top-color:#777;border-left-color:#777;background:#fbfefc;font:6.700px/9px Lato,sans-serif;color:#666;padding:0 1px;white-space:nowrap}
.sel{display:flex;justify-content:space-between;padding:0 2px}
.sel::after{content:"";border:3px solid transparent;border-top:6px solid #111;border-bottom:0;margin-top:1px;margin-right:1px}
.desc{width:79px;display:flex}
.desc u{width:1px;height:9px;background:#000}
.s1{width:38px}.s2{width:41px}
.btn{font:700 6.300px/11px "Open Sans",sans-serif;color:#fff;background:#8e2f2d;border:1px solid #4c1513;border-radius:2px;height:14px;text-align:center;white-space:nowrap;letter-spacing:-.12px}
.f5 .btn{width:75px;letter-spacing:-.22px;margin-top:2px}
.det{margin:1px 0 4px 0}
.gridwrap{display:flex;padding-left:4px;height:158px}
.grid{width:360px}
.gr{display:grid;grid-template-columns:10.500px 75.500px 55px 53.500px 37px 53px 35px 33.500px;column-gap:1px;height:21.300px;margin-bottom:1px;font:6.700px/9px Lato,sans-serif;color:#6a6d6c}
.gr>div{background:#efefef;display:flex;align-items:center;justify-content:flex-end;overflow:hidden}
.gr>div:nth-child(2){justify-content:flex-start;padding-left:2px}
.gr>div:nth-child(3),.gr>div:nth-child(4){padding-right:.5px}
.gr.alt>div{background:#dfe3e1}
.gr.gh{height:13px;font:700 6.300px/13px "Open Sans",sans-serif;color:#fff}
.gr.gh>div{background:#dc9895;white-space:nowrap;justify-content:center;letter-spacing:-.16px}
.gr.gh>div:nth-child(2){padding-left:5px;justify-content:flex-start}
.gr.gh>div:nth-child(3),.gr.gh>div:nth-child(4){justify-content:flex-end;padding-right:3px}
.gr.gh>div:nth-child(8){justify-content:flex-start;padding-left:5px;letter-spacing:-.3px}
.x{color:#7797ac}
.gr>div.x{justify-content:center}
.gr .sel{width:73px}
.n1{width:52px;text-align:right}.n2{width:25px;text-align:right}
.gr>div.tmc{display:block;line-height:9px;padding-top:2px}
.tmc s{display:inline-block;width:7px;height:7px;border:1px solid #c3c6c4;background:#e6e8e7;border-radius:1px;margin-left:4px;vertical-align:-.5px}
.gr>div.bd{padding-top:1px}
.bd span{display:inline-block;height:9px;line-height:9px;border-top:1px solid #777;border-left:1px solid #777;margin-left:2.500px}
.bd s{margin-left:2px;margin-right:1px}
.newrow{background:#d89592;height:11px;font:700 6.500px/10px "Open Sans",sans-serif;color:#7c6f6f;text-align:center;padding-left:9px}
.gridwrap .sb{width:14px;padding:3px 0 4px}
.gridwrap .sb em{margin:4px 0 7px}
.sbp{width:15px}
.sbp em{width:12px;margin:4px 0 18px}
.pfoot{display:flex;height:15px}
.hsb{width:380px;background:#f0f2f1;display:flex;align-items:center;justify-content:space-between;padding:0 5px}
.hsb::before,.hsb::after{content:"";border:3.500px solid transparent}
.hsb::before{border-left:0;border-right:4px solid #888}
.hsb::after{border-right:0;border-left:4px solid #333}
.hsb em{flex:1;height:12px;background:#c0c0c0;margin:0 7px 0 5px}
.corner{flex:1;background:#d8dedc}
.actions{display:flex;gap:9px;padding-top:6px}
.actions .btn{width:39px}
.actions .btn+.btn{width:37px}

.marks{position:absolute;left:0;top:0;width:1213px;height:685px;pointer-events:none}
.shadow{filter:drop-shadow(4px 5px 2px rgba(0,0,0,.45))}

/* taskbars */
.taskbar{display:flex;background:#151617;flex:none;overflow:hidden}
.inner{height:36px}
.outer{height:40px}
.app{display:flex;align-items:center;justify-content:center;position:relative}
.app svg{width:20px;height:20px}
.app svg.s{width:15px;height:15px}
.app svg.m{width:17px;height:17px}
.app svg.l{width:21px;height:21px}
.inner .app{width:43.750px}
.inner .app:first-child{margin-left:-1px}
.app.on{background:#464849}
.run::after{content:"";height:2px;background:#9fd3f2;position:absolute;bottom:0;left:4px;right:4px}
.on::after{left:0;right:0}
.outer .app{width:49.100px}
.outer .app.w48{width:48px}
.outer .tv{margin-right:2px}
.outer .app svg{width:23px;height:23px}
.outer .app svg.s{width:17px;height:17px}
.outer .app svg.m{width:20px;height:20px}
.outer .last{width:48px;margin-left:13px}
.tray{margin-left:auto;display:flex;align-items:center;color:#fff;text-align:center;font-size:11px;letter-spacing:-.45px}
.tray>svg{width:15px;height:15px;margin:0 3.200px}
.tray svg.ppl{margin-right:13.500px}
.lang{width:31px}
.clock{width:63px;line-height:16px;white-space:nowrap}
.nt{width:42px;position:relative}
.nt svg{width:23px;height:23px;margin-left:8px;margin-top:3px}
.nt b{position:absolute;font:700 9px/10px "Open Sans",sans-serif;left:21px;top:15px}
.outer .tray{font-size:12px}
.outer .tray>svg{width:17px;height:17px;margin:0 3.400px}
.outer .tray svg.ppl{margin-right:15px}
.outer .lang{width:38px}
.outer .clock{width:70px;line-height:18px}
.outer .nt{width:48px}
.outer .nt svg{width:26px;height:26px;margin-left:9px}
.outer .nt b{left:25px;top:16px;font-size:10px}
.peek{width:5px;height:40px;border-left:1px solid #777}

/* playback controls */
.player{height:20px;flex:none;background:#dcdcdc;display:flex;align-items:center}
.pb{width:20px;height:20px}
.pb svg{width:18px;height:18px}
.hot{display:flex;align-items:center;justify-content:center}
.hot svg{border:1px solid #8a5a10;border-radius:3px;background:linear-gradient(90deg,#ffd050,#fff8d0 50%,#ffe070)}
.one{display:flex;align-items:center;justify-content:center}
.one span{width:12px;height:13px;border:1px solid #111;font:9px/11px "Liberation Sans",sans-serif;text-align:center;letter-spacing:-.8px}
.time{width:98px;height:20px;margin-left:1px;background:linear-gradient(170deg,#fff,#fffde0 45%,#f8f4a8);text-align:center;font:10px/20px "DejaVu Sans Condensed","Noto Sans",sans-serif;letter-spacing:-.3px}
.slider{width:1106px;margin-left:11px;position:relative}
.track{height:4px;background:#9b9b9b;border-top:1px solid #444;border-bottom:1px solid #777}
.knob{position:absolute;left:357px;top:-3px;width:16px;height:10px}
.info{width:20px;height:20px;margin-left:auto;background:#f4f4f4;display:flex;align-items:center;justify-content:center}
.info svg{width:13px;height:13px}
```
